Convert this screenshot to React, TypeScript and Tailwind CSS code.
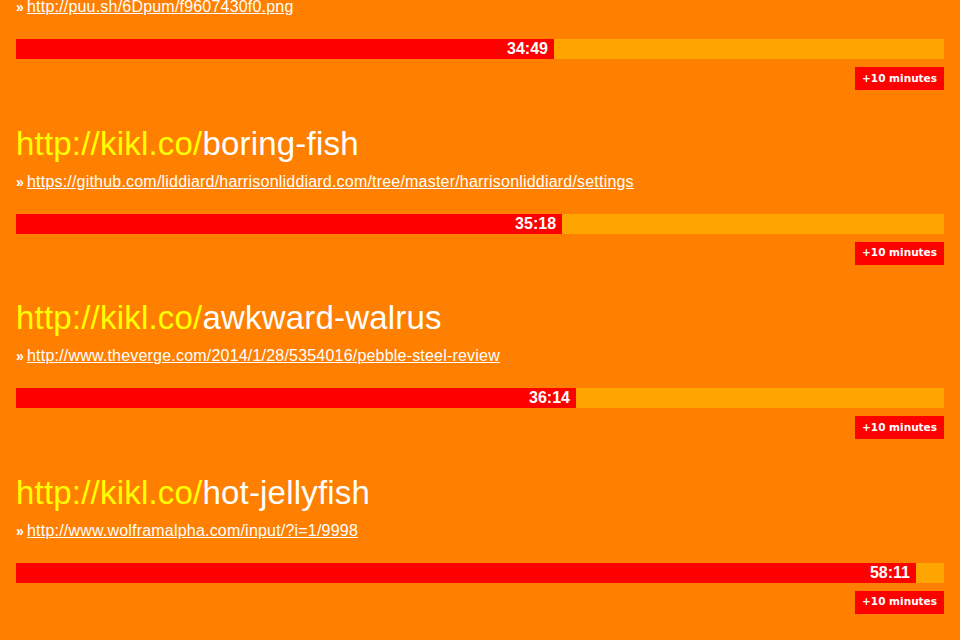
const links = [
    { slug: "", target: "http://puu.sh/6Dpum/f9607430f0.png", time: "34:49", pct: 57.97 },
    { slug: "boring-fish", target: "https://github.com/liddiard/harrisonliddiard.com/tree/master/harrisonliddiard/settings", time: "35:18", pct: 58.84 },
    { slug: "awkward-walrus", target: "http://www.theverge.com/2014/1/28/5354016/pebble-steel-review", time: "36:14", pct: 60.34 },
    { slug: "hot-jellyfish", target: "http://www.wolframalpha.com/input/?i=1/9998", time: "58:11", pct: 96.98 },
]

function LinkRow({ slug, target, time, pct }: { slug: string, target: string, time: string, pct: number }) {
    return (
        <section className="mb-[37.5px]">
            <h2 className="text-[33px] leading-[32px] tracking-[0.2px] font-normal">
                <span className="text-[#ffff00]">http://kikl.co/</span>
                <span className="text-white">{slug}</span>
            </h2>
            <p className="mt-[12px] text-[16px] leading-[20px] tracking-[0.2px] text-white">
                <span className="inline-block w-[11px] font-bold text-[14px]">»</span>
                <a href={target} className="underline">{target}</a>
            </p>
            <div className="mt-[22px] h-[20px] bg-[#ffa500]">
                <div className="h-full bg-[#ff0000] text-right pr-[6px] text-white font-bold text-[16px] leading-[20px]" style={{ width: `${pct}%` }}>
                    {time}
                </div>
            </div>
            <div className="mt-[8px] flex justify-end">
                <button className="h-[23px] px-[7px] bg-[#ff0000] text-white font-bold text-[10.5px] font-['DejaVu_Sans',Verdana,sans-serif]">
                    +10 minutes
                </button>
            </div>
        </section>
    )
}

export default function App() {
    return (
        <div className="h-[640px] overflow-hidden bg-[#ff7f00] font-['Liberation_Sans',Helvetica,Arial,sans-serif]">
            <div className="px-4 -mt-[47px]">
                {links.map(l => <LinkRow key={l.time} {...l} />)}
            </div>
        </div>
    )
}
